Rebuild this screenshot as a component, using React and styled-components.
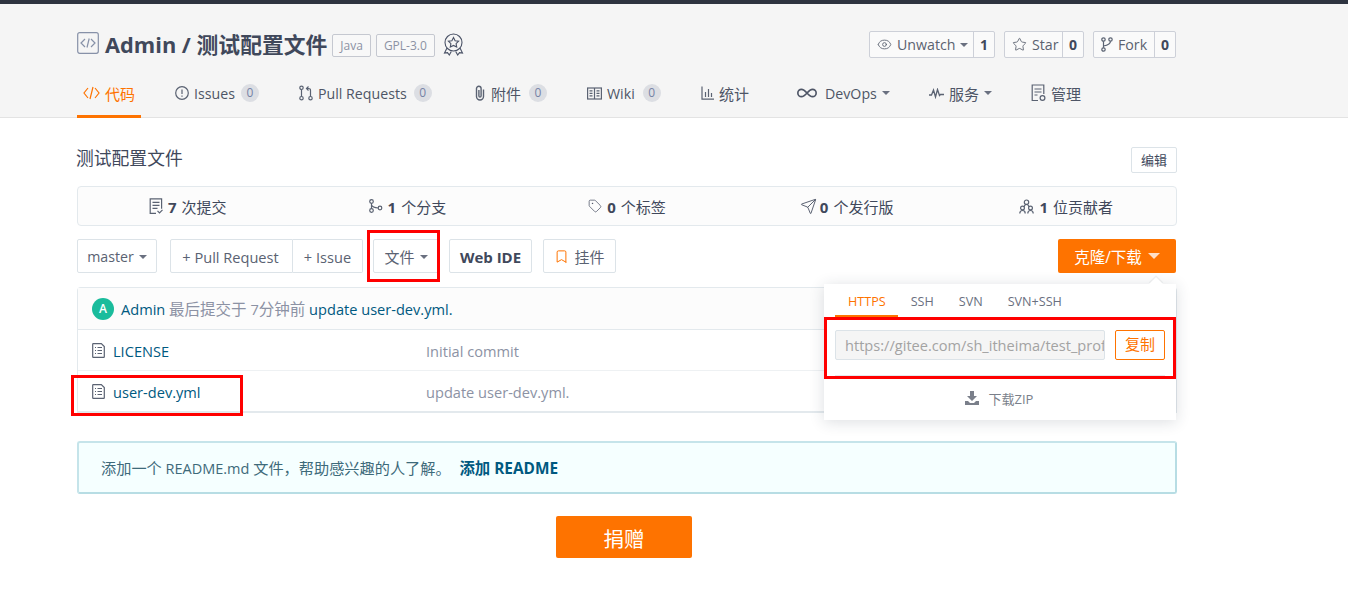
import React from 'react';
import styled, { createGlobalStyle } from 'styled-components';
import { Eye, Star, Infinity as InfinityIcon, Send, Bookmark, Tag } from 'lucide-react';

const Global = createGlobalStyle`
  html, body { margin: 0; padding: 0; background: #fff; }
  body { font-family: "Open Sans", "Noto Sans CJK SC", sans-serif; font-size: 14px; color: #40485b; height: 601px; overflow: hidden; }
  * { box-sizing: border-box; }
`;

const TopBar = styled.div`height: 4px; background: #2e3440;`;
const Header = styled.header`height: 114px; background: #f5f5f5; border-bottom: 1px solid #e3e3e3; padding-top: 27px;`;
const Container = styled.div`width: 1100px; margin-left: 77px; position: relative;`;
const Main = styled(Container)`padding-top: 29px;`;
const Han = styled.span`font-size: ${p => p.$s || 15}px;`;
const TitleRow = styled.div`display: flex; align-items: center; height: 27px;`;
const Title = styled.h1`margin: 0 5px 0 6px; font-size: 21.8px; font-weight: 700; line-height: 27px; color: #40485b; white-space: nowrap;`;
const LangTag = styled.span`height: 23px; border: 1px solid #c5c8d0; border-radius: 2px; padding: 0 7px; margin-right: 5px; margin-top: 2px; font-size: 12px; line-height: 21px; color: #8c92a4; background: #f8f8f8;`;
const Spacer = styled.div`flex: 1;`;
const Social = styled.div`display: flex; height: 27px; width: ${p => p.$w}px; border: 1px solid #cdd0d8; border-radius: 2px; margin-left: ${p => p.$ml}px; margin-right: ${p => p.$mr || 0}px; background: #fafafa; line-height: 25px;`;
const SocialMain = styled.span`flex: 1; display: flex; align-items: center; gap: 5px; padding-left: 7px; color: #5b6270; font-size: 14.2px; border-right: 1px solid #cdd0d8;`;
const SocialCount = styled.span`width: 20px; text-align: center; font-weight: 700; color: #40485b; font-size: 14px;`;
const Caret = styled.i`display: inline-block; width: 0; height: 0; border-left: 4px solid transparent; border-right: 4px solid transparent; border-top: 4px solid ${p => p.$color || '#6a7080'};`;
const BigCaret = styled(Caret)`border-width: 6px 6px 0; margin-left: 0;`;
const Tabs = styled.nav`display: flex; height: 43px; margin-top: 17px;`;
const TabItem = styled.a`display: flex; align-items: center; gap: ${p => p.$gap || 5}px; height: 43px; padding: 0 6px 4px; flex: none; width: ${p => p.$w}px; margin-right: ${p => p.$mr || 0}px; font-size: 14.2px; color: ${p => p.$active ? '#fe7300' : '#4e5566'}; border-bottom: 3px solid ${p => p.$active ? '#fe7300' : 'transparent'}; white-space: nowrap;`;
const Count = styled.span`min-width: 18px; height: 18px; border-radius: 9px; background: #dcdee3; color: #7683a6; font-size: 12px; line-height: 18px; text-align: center; margin-left: ${p => p.$ml ?? 2}px;`;
const Desc = styled.div`display: flex; justify-content: space-between; align-items: center; height: 26px;`;
const DescText = styled.span`font-size: 17.8px; line-height: 24px; margin: -4px 0 0 -1px; color: #40485b;`;
const EditBtn = styled.span`width: 46px; height: 26px; border: 1px solid #dce3e8; border-radius: 2px; font-size: 13px; line-height: 24px; text-align: center; color: #40485b;`;
const Stats = styled.div`display: grid; grid-template-columns: repeat(5, 1fr); height: 40px; margin-top: 13px; border: 1px solid #e3e9ed; border-radius: 4px; background: #fcfcfc;`;
const Stat = styled.div`display: flex; align-items: center; justify-content: center; gap: ${p => p.$gap ?? 5}px; color: #40485b; font-size: 15px; b { font-weight: 700; margin-right: 5px; font-size: 15px; }`;
const Actions = styled.div`display: flex; align-items: center; height: 34px; margin-top: 13px;`;
const Btn = styled.span`display: flex; align-items: center; justify-content: center; gap: 5px; flex: none; height: 34px; padding-top: 1px; width: ${p => p.$w}px; margin-left: ${p => p.$ml || 0}px; border: 1px solid #dce3e8; border-radius: 2px; background: #fff; color: #5a6272; font-size: ${p => p.$fs || 14.6}px; white-space: nowrap;`;
const BoldBtn = styled(Btn)`font-weight: 700; color: #40485b;`;
const GroupLeft = styled(Btn)`border-radius: 2px 0 0 2px; padding-right: 2px;`;
const GroupRight = styled(Btn)`border-left: 0; border-radius: 0 2px 2px 0;`;
const Clone = styled.span`display: flex; align-items: center; justify-content: center; gap: 6px; width: 118px; height: 34px; margin: 0 1px 0 auto; background: #fe7300; color: #fff; border-radius: 2px; font-size: 15.5px;`;
const Table = styled.div`margin-top: 14px; border: 1px solid #e3e9ed; border-bottom: 2px solid #e3e9ed; border-radius: 4px 4px 0 0; height: 126px; font-size: 14.6px;`;
const CommitHead = styled.div`display: flex; align-items: center; height: 42px; padding-left: 14px; background: #fcfcfc; border-bottom: 1px solid #e3e9ed; color: #8c92a4; gap: 7px; a { color: #005980; }`;
const Avatar = styled.span`width: 22px; height: 22px; border-radius: 50%; background: #1abc9c; color: #fff; font-size: 12px; font-weight: 600; line-height: 22px; text-align: center;`;
const FileRow = styled.div`display: flex; align-items: center; height: 41px; padding-left: 14px; padding-top: ${p => p.$last ? 0 : 1}px; border-bottom: ${p => p.$last ? 0 : '1px solid #eef1f3'};`;
const FileName = styled.a`width: 313px; margin-left: 8px; color: #005980;`;
const FileMsg = styled.span`color: #8c92a4;`;
const Popup = styled.div`position: absolute; left: 747px; top: 166px; width: 352px; height: 136px; background: #fff; box-shadow: 0 2px 14px rgba(40,50,70,.16); font-size: 12px; z-index: 2;
  &::before { content: ""; position: absolute; right: 15px; top: -5px; width: 10px; height: 10px; background: #fff; transform: rotate(45deg); box-shadow: -1px -1px 1px rgba(40,50,70,.08); }`;
const PopTabs = styled.div`display: flex; height: 34px; padding-left: 11px;`;
const PopTab = styled.span`display: block; height: 34px; padding: 0 12px 0 13px; line-height: 36px; font-size: 12.6px; color: ${p => p.$active ? '#fe7300' : '#6a7080'}; border-bottom: ${p => p.$active ? '3px solid #fe7300' : '0'};`;
const UrlRow = styled.div`display: flex; gap: 10px; padding: 12px 11px 0; height: 57px;`;
const Url = styled.input`width: 270px; height: 30px; margin: 0; background: #f5f5f5; border: 1px solid #dce3e8; border-radius: 2px; padding: 0 0 0 9px; font: 14.6px "Open Sans", sans-serif; color: #a3a3a3; outline: 0;`;
const Copy = styled.span`width: 50px; height: 30px; border: 1px solid #fe7300; border-radius: 2px; color: #fe7300; font-size: 15px; line-height: 27px; text-align: center;`;
const Divider = styled.div`height: 1px; margin: 0 11px; background: #e3e9ed;`;
const Zip = styled.div`display: flex; align-items: center; justify-content: center; gap: 10px; height: 44px; color: #7a7f8a; font-size: 13px; padding-right: 2px;`;
const Notice = styled.div`height: 53px; margin-top: 28px; border: 2px solid; border-color: #c5e4ea #b7dde4 #b7dde4 #c5e4ea; border-radius: 3px; background: #f5ffff; padding-left: 22px; line-height: 51px; font-size: 14.5px; color: #3d6a7a; b { color: #005980; font-weight: 700; margin-left: 5px; font-size: 15.4px; }`;
const DonateRow = styled.div`display: flex; justify-content: center; margin-top: 22px; padding-right: 6px;`;
const Donate = styled.span`display: flex; align-items: center; justify-content: center; width: 136px; height: 42px; padding-top: 1px; background: #fe7300; border-radius: 2px; color: #fff; font-size: 20.5px;`;
const RedBox = styled.div`position: absolute; left: ${p => p.$x}px; top: ${p => p.$y}px; width: ${p => p.$w}px; height: ${p => p.$h}px; border: 3px solid #f00; z-index: 3; pointer-events: none;`;
const Svg = styled.svg`flex: none; fill: none; stroke: ${p => p.$c || '#5a6272'}; stroke-width: ${p => p.$sw || 1.2};`;

const RepoIcon = () => <Svg width="22" height="22" viewBox="0 0 22 22" $c="#8791a8" style={{marginTop: -3}}><rect x=".7" y=".7" width="20.6" height="20.6" rx="2"/><path d="M8 7l-4 4 4 4M14 7l4 4-4 4M12.2 6.5l-2.2 9"/></Svg>;
const Award = () => <Svg width="21" height="24" viewBox="0 0 20 24" $c="#4a5266" $sw="1.1" style={{marginLeft: 3}}><circle cx="10" cy="9.5" r="8.5"/><path d="M10 4.5l1.6 3.2 3.5.5-2.5 2.4.6 3.5-3.2-1.7-3.2 1.7.6-3.5-2.5-2.4 3.5-.5z"/><path d="M3.5 15L1 20l3-.3 1.8 2.3 2-3.6M16.5 15l2.5 5-3-.3-1.8 2.3-2-3.6"/></Svg>;
const CodeI = ({c}) => <Svg width="17" height="14" viewBox="0 0 17 14" $c={c}><path d="M5 2L1 7l4 5M12 2l4 5-4 5M10 1L7 13"/></Svg>;
const IssueI = () => <Svg width="14" height="14" viewBox="0 0 14 14"><circle cx="7" cy="7" r="6.3"/><path d="M7 3.5v4.5M7 9.5v1.2"/></Svg>;
const PrI = () => <Svg width="14" height="16" viewBox="0 0 14 16"><circle cx="2.5" cy="2.8" r="1.7"/><circle cx="2.5" cy="13.2" r="1.7"/><circle cx="11.5" cy="13.2" r="1.7"/><path d="M2.5 4.5v7M11.5 11.5V5.5q0-2-2-2H8M9.5 1.5L7.5 3.5l2 2"/></Svg>;
const ClipI = () => <Svg width="12" height="16" viewBox="0 0 12 16" $sw="1.4"><path d="M9.5 4.5v7a3.5 3.5 0 0 1-7 0V3.5a2.3 2.3 0 0 1 4.6 0v7.5a1.1 1.1 0 0 1-2.2 0V5"/></Svg>;
const WikiI = () => <Svg width="15" height="13" viewBox="0 0 15 13"><rect x=".6" y="1" width="13.8" height="11"/><path d="M7.5 1v11M2.5 3.8h3M2.5 6.3h3M2.5 8.8h3M9.5 3.8h3M9.5 6.3h3M9.5 8.8h3"/></Svg>;
const ChartI = () => <Svg width="13" height="14" viewBox="0 0 13 14"><path d="M1 .5v12.7h12M4.5 11V6M7.5 11V3M10.5 11V7"/></Svg>;
const PulseI = () => <Svg width="15" height="11" viewBox="0 0 15 11" $sw="1.3"><path d="M0 7h2.5l2-5 2 7 2-7.5 2 6 1-1H15"/></Svg>;
const ManageI = () => <Svg width="15" height="18" viewBox="0 0 15 18"><path d="M7 16.5H1.2V1h11.6v9M3.5 5h7M3.5 8h7M3.5 11h3"/><circle cx="11.5" cy="14" r="2.4"/></Svg>;
const ForkI = () => <Svg width="12" height="15" viewBox="0 0 12 15"><circle cx="2.5" cy="2.5" r="1.7"/><circle cx="9.5" cy="2.5" r="1.7"/><circle cx="2.5" cy="12.5" r="1.7"/><path d="M2.5 4.2v6.6M9.5 4.2q0 3.4-7 4.8"/></Svg>;
const CommitI = () => <Svg width="14" height="16" viewBox="0 0 14 16"><path d="M7 15.3H1.2V.8h11.4v10M3.5 4.3h7M3.5 7.3h7M3.5 10.3h5M8.5 12.8l2 2 3-3"/></Svg>;
const BranchI = () => <Svg width="14" height="14" viewBox="0 0 14 14"><circle cx="2.5" cy="2.5" r="1.8"/><circle cx="2.5" cy="11.5" r="1.8"/><circle cx="11" cy="9" r="1.8"/><path d="M2.5 4.3v5.4M2.5 6q1 2.5 6.7 3"/></Svg>;
const PeopleI = () => <Svg width="15" height="15" viewBox="0 0 15 15"><circle cx="7.5" cy="3.2" r="2.2"/><circle cx="3.5" cy="9" r="1.9"/><circle cx="11.5" cy="9" r="1.9"/><path d="M.8 14.5q0-3 2.7-3t2.7 3M8.8 14.5q0-3 2.7-3t2.7 3M5 8q.5-2.5 2.5-2.5T10 8"/></Svg>;
const FileI = () => <Svg width="13" height="15" viewBox="0 0 13 15"><path d="M.7 13.8V1.2q0-.6.6-.6h8L12.3 3.6v10.2q0 .6-.6.6H1.3q-.6 0-.6-.6z"/><path d="M5.5 4.5h4.5M5.5 7.5h4.5M5.5 10.5h4.5M3 4.5h1M3 7.5h1M3 10.5h1"/></Svg>;
const ZipI = () => <svg width="14" height="14" viewBox="0 0 14 14" fill="#7a7f8a"><path d="M5 0h4v5h3L7 10 2 5h3z"/><path d="M0 10h3l2 2h4l2-2h3v4H0z"/></svg>;

export default function App() {
  return (
    <>
      <Global />
      <TopBar />
      <Header>
        <Container>
          <TitleRow>
            <RepoIcon />
            <Title>Admin / 测试配置文件</Title>
            <LangTag>Java</LangTag>
            <LangTag>GPL-3.0</LangTag>
            <Award />
            <Spacer />
            <Social $w={126} $ml={0}><SocialMain><Eye size={15} strokeWidth={1.4} />Unwatch <Caret /></SocialMain><SocialCount>1</SocialCount></Social>
            <Social $w={80} $ml={9}><SocialMain><Star size={15} strokeWidth={1.4} />Star</SocialMain><SocialCount>0</SocialCount></Social>
            <Social $w={83} $ml={9} $mr={1}><SocialMain><ForkI />Fork</SocialMain><SocialCount>0</SocialCount></Social>
          </TitleRow>
          <Tabs>
            <TabItem $active $w={64} $mr={28}><CodeI c="#fe7300" /><Han>代码</Han></TabItem>
            <TabItem $w={124}><IssueI />Issues<Count $ml={1}>0</Count></TabItem>
            <TabItem $w={175}><PrI />Pull Requests<Count>0</Count></TabItem>
            <TabItem $w={113}><ClipI /><Han>附件</Han><Count $ml={3}>0</Count></TabItem>
            <TabItem $w={114}><WikiI />Wiki<Count $ml={3}>0</Count></TabItem>
            <TabItem $w={95}><ChartI /><Han>统计</Han></TabItem>
            <TabItem $w={133} $gap={7}><InfinityIcon size={22} strokeWidth={1.8} />DevOps<Caret style={{marginLeft: -2}} /></TabItem>
            <TabItem $w={102} $gap={5}><PulseI /><Han>服务</Han><Caret /></TabItem>
            <TabItem $w={80}><ManageI /><Han>管理</Han></TabItem>
          </Tabs>
        </Container>
      </Header>
      <Main>
        <Desc><DescText>测试配置文件</DescText><EditBtn>编辑</EditBtn></Desc>
        <Stats>
          <Stat><CommitI /><span><b>7</b>次提交</span></Stat>
          <Stat><BranchI /><span><b>1</b>个分支</span></Stat>
          <Stat><Tag size={14} strokeWidth={1.2} /><span><b>0</b>个标签</span></Stat>
          <Stat $gap={3}><Send size={17} strokeWidth={1.2} /><span><b>0</b>个发行版</span></Stat>
          <Stat><PeopleI /><span><b>1</b>位贡献者</span></Stat>
        </Stats>
        <Actions>
          <Btn $w={80} $fs={14.2}>master <Caret /></Btn>
          <GroupLeft $w={123} $ml={13}>+ Pull Request</GroupLeft>
          <GroupRight $w={70}>+ Issue</GroupRight>
          <Btn $w={66} $ml={10} $fs={15}>文件 <Caret /></Btn>
          <BoldBtn $w={83} $ml={10} $fs={15}>Web IDE</BoldBtn>
          <Btn $w={73} $ml={11} $fs={15}><Bookmark size={15} color="#fe7300" strokeWidth={1.6} />挂件</Btn>
          <Clone>克隆/下载 <BigCaret $color="#ffe0c8" /></Clone>
        </Actions>
        <Table>
          <CommitHead><Avatar>A</Avatar><span><a>Admin</a> <Han $s={15.5}>最后提交于</Han> 7<Han $s={15.5}>分钟前</Han> <a>update user-dev.yml.</a></span></CommitHead>
          <FileRow><FileI /><FileName>LICENSE</FileName><FileMsg>Initial commit</FileMsg></FileRow>
          <FileRow $last><FileI /><FileName>user-dev.yml</FileName><FileMsg>update user-dev.yml.</FileMsg></FileRow>
        </Table>
        <Popup>
          <PopTabs><PopTab $active>HTTPS</PopTab><PopTab>SSH</PopTab><PopTab>SVN</PopTab><PopTab>SVN+SSH</PopTab></PopTabs>
          <UrlRow><Url readOnly value="https://gitee.com/sh_itheima/test_profile.git" /><Copy>复制</Copy></UrlRow>
          <Divider />
          <Zip><ZipI />下载ZIP</Zip>
        </Popup>
        <Notice><Han $s={15.2}>添加一个</Han> README.md <Han $s={15.2}>文件，帮助感兴趣的人了解。</Han> <b>添加 README</b></Notice>
        <DonateRow><Donate>捐赠</Donate></DonateRow>
        <RedBox $x={290} $y={112} $w={73} $h={52} />
        <RedBox $x={-6} $y={257} $w={172} $h={41} />
        <RedBox $x={747} $y={199} $w={352} $h={62} />
      </Main>
    </>
  );
}
